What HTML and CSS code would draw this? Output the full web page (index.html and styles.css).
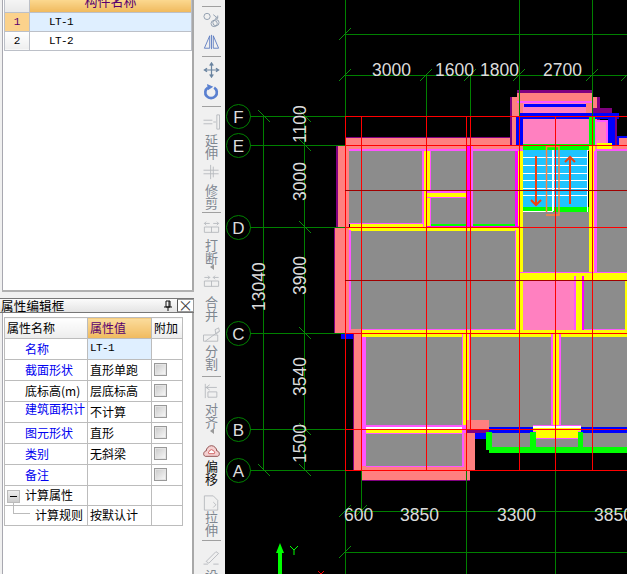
FILE: index.html
```html
<!DOCTYPE html>
<html lang="zh">
<head>
<meta charset="utf-8">
<title>属性编辑框</title>
<link rel="stylesheet" href="styles.css">
</head>
<body>
<div class="app">
  <aside class="side">
    <section class="list-panel">
      <table class="list">
        <tr class="list-head"><th class="num-head"></th><th class="name-head">构件名称</th></tr>
        <tr class="sel"><td class="num">1</td><td class="nm">LT-1</td></tr>
        <tr><td class="num">2</td><td class="nm">LT-2</td></tr>
      </table>
    </section>
    <div class="split"></div>
    <header class="title">
      <span class="title-text">属性编辑框</span>
      <svg class="pin" width="10" height="12" viewBox="0 0 10 12"><path d="M3 1h4v6H3zM1 7h8M5 7v4M6 1v6" fill="none" stroke="#111"/></svg>
      <span class="close">×</span>
    </header>
    <section class="prop-panel">
      <table class="props">
        <colgroup><col class="c1"><col class="c2"><col class="c3"></colgroup>
        <tr class="prop-head"><th class="ph">属性名称</th><th class="ph-on">属性值</th><th class="ph">附加</th></tr>
        <tr><td class="k blue">名称</td><td class="v sel-v">LT-1</td><td></td></tr>
        <tr><td class="k blue">截面形状</td><td class="v">直形单跑</td><td><i class="chk"></i></td></tr>
        <tr><td class="k">底标高(m)</td><td class="v">层底标高</td><td><i class="chk"></i></td></tr>
        <tr><td class="k blue up">建筑面积计</td><td class="v">不计算</td><td><i class="chk"></i></td></tr>
        <tr><td class="k blue">图元形状</td><td class="v">直形</td><td><i class="chk"></i></td></tr>
        <tr><td class="k blue">类别</td><td class="v">无斜梁</td><td><i class="chk"></i></td></tr>
        <tr><td class="k blue">备注</td><td class="v"></td><td><i class="chk"></i></td></tr>
        <tr class="short"><td class="k group"><i class="minus"></i>计算属性</td><td></td><td></td></tr>
        <tr class="short"><td class="k rule"><i class="elbow"></i>计算规则</td><td class="v">按默认计</td><td></td></tr>
      </table>
    </section>
  </aside>

  <nav class="bar">
    <div class="grp g1">
      <svg class="ic" viewBox="0 0 20 18"><circle cx="5" cy="5" r="3.5"/><circle cx="13" cy="13" r="3.5"/><circle cx="15" cy="12" r="3.5"/><path d="M12 3l5 4M17 4v3h-3" class="dk"/></svg>
      <svg class="ic" viewBox="0 0 20 18"><path d="M8 2L2 16h6zM12 2l6 14h-6zM10 1v16" class="bl"/></svg>
    </div>
    <div class="grp g1b">
      <svg class="ic" viewBox="0 0 20 18"><path d="M10 1v16M2 9h16M8 4l2-3 2 3M8 14l2 3 2-3M5 7L2 9l3 2M15 7l3 2-3 2" class="mv"/></svg>
      <svg class="ic" viewBox="0 0 20 18"><path d="M6 4a6.500 6.500 0 1 0 7 0" class="rot"/><path d="M5 0l7 3-6 4z" class="rot-h"/></svg>
    </div>
    <div class="grp g2">
      <div class="tool">
        <svg class="ic" viewBox="0 0 20 18"><path d="M1 7h10M1 11h10M16 1h3v16h-3zM12 9h3" class="gr"/></svg>
        <span class="lb">延<br>伸</span>
      </div>
      <div class="tool t2">
        <svg class="ic" viewBox="0 0 20 18"><path d="M1 7h17M1 11h17M9 1v16M12 3v12" class="gr"/></svg>
        <span class="lb">修<br>剪</span>
      </div>
    </div>
    <div class="grp g3">
      <div class="tool">
        <svg class="ic" viewBox="0 0 20 18"><path d="M2 9h16v6H2zM10 9v6M2 5h6M12 5h6M4 3L2 5l2 2M16 3l2 2-2 2" class="gr"/></svg>
        <span class="lb">打<br>断</span>
        <i class="tri"></i>
      </div>
      <div class="tool t3">
        <svg class="ic" viewBox="0 0 20 18"><path d="M2 9h16v6H2zM10 9v6M2 5h6M12 5h6M6 3l2 2-2 2M14 3l-2 2 2 2" class="gr"/></svg>
        <span class="lb">合<br>并</span>
      </div>
      <div class="tool t4">
        <svg class="ic" viewBox="0 0 20 18"><path d="M1 9h16v7H1zM3 16L18 5M14 3l4-2 1 4-4 3z" class="gr"/></svg>
        <span class="lb">分<br>割</span>
      </div>
    </div>
    <div class="grp g4">
      <div class="tool">
        <svg class="ic" viewBox="0 0 20 18"><path d="M3 1v16M3 5h13M8 2L4 5l4 3M6 10h10v6H6z" class="gr"/></svg>
        <span class="lb">对<br>齐</span>
        <i class="tri"></i>
      </div>
      <div class="tool t5">
        <svg class="ic" viewBox="0 0 20 18"><path d="M3 15c-3-1-2-6 1-6 0-3 3-6 6-6s6 3 6 6c3 0 4 5 1 6z" class="off"/><path d="M7 12c-1-1 0-3 1-3 0-2 4-2 4 0 2 0 2 3 1 3z" class="off2"/></svg>
        <span class="lb act">偏<br>移</span>
      </div>
      <div class="tool t6">
        <svg class="ic" viewBox="0 0 20 18"><path d="M2 1h10l5 5v11H2zM12 8l3 3-3 3" class="gr"/></svg>
        <span class="lb">拉<br>伸</span>
      </div>
    </div>
    <div class="tool t7">
      <svg class="ic" viewBox="0 0 20 18"><path d="M4 14L15 3l3 2L7 16zM1 17h5M12 17h6" class="gr"/></svg>
      <span class="lb">设</span>
    </div>
  </nav>

  <main class="canvas">
    <svg class="plan" width="402" height="574" viewBox="225 0 402 574">
      <g class="solid">
        <rect class="pu" x="517" y="90" width="75" height="3"/>
        <rect class="pu" x="510" y="97" width="90" height="49"/>
        <rect class="pk" x="512" y="97" width="85" height="49"/>
        <rect class="pk" x="517" y="93" width="75" height="5"/>
        <rect class="mg" x="517" y="101" width="75" height="2"/>
        <rect class="hp" x="523" y="103" width="63" height="11"/>
        <rect class="bl" x="524" y="104" width="62" height="3"/>
        <rect class="pu" x="592" y="108" width="20" height="5"/>
        <rect class="bl" x="519" y="113" width="100" height="6"/>
        <rect class="bl" x="516" y="117" width="7" height="29"/>
        <rect class="hp" x="523" y="119" width="66" height="27"/>
        <rect class="gn" x="589" y="117" width="6" height="29"/>
        <rect class="mg" x="595" y="120" width="13" height="26"/>
        <rect class="hp" x="596" y="122" width="10" height="24"/>
        <rect class="bl" x="608" y="117" width="7" height="29"/>
        <rect class="pu" x="615" y="117" width="2" height="29"/>
        <rect class="bl" x="617" y="136" width="10" height="10"/>
        <rect class="pu" x="345" y="137" width="165" height="10"/>
        <rect class="pk" x="345" y="138" width="165" height="13"/>
        <rect class="pk" x="510" y="145" width="117" height="6"/>
        <rect class="pk" x="619" y="138" width="8" height="8"/>
        <rect class="yl" x="597" y="143" width="15" height="6"/>
        <rect class="mg" x="345" y="149" width="282" height="2"/>
        <rect class="pu" x="336" y="146" width="4" height="81"/>
        <rect class="pk" x="338" y="146" width="11" height="81"/>
        <rect class="pu" x="334" y="227" width="3" height="106"/>
        <rect class="pk" x="335" y="227" width="14" height="106"/>
        <rect class="pk" x="345" y="325" width="16" height="9"/>
        <rect class="bl" x="341" y="334" width="12" height="5"/>
        <rect class="pu" x="353" y="334" width="2" height="136"/>
        <rect class="pk" x="354" y="334" width="8" height="136"/>
        <rect class="gy" x="349" y="151" width="73" height="73"/>
        <rect class="mg" x="422" y="151" width="9" height="76"/>
        <rect class="yl" x="424" y="151" width="6" height="76"/>
        <rect class="gy" x="431" y="151" width="36" height="41"/>
        <rect class="mg" x="427" y="191" width="40" height="7"/>
        <rect class="yl" x="427" y="193" width="40" height="4"/>
        <rect class="gy" x="431" y="198" width="36" height="26"/>
        <rect class="gn" x="431" y="224" width="85" height="2"/>
        <rect class="hm" x="466" y="146" width="7" height="81"/>
        <rect class="mg" x="470" y="146" width="3" height="81"/>
        <rect class="gy" x="473" y="151" width="42" height="73"/>
        <rect class="hm" x="515" y="151" width="3" height="76"/>
        <rect class="yl" x="518" y="151" width="5" height="76"/>
        <rect class="mg" x="349" y="223" width="73" height="1"/>
        <rect class="yl" x="350" y="224" width="73" height="4"/>
        <rect class="hm" x="427" y="226" width="92" height="1"/>
        <rect class="yl" x="349" y="228" width="171" height="3"/>
        <rect class="gy" x="523" y="212" width="66" height="60"/>
        <rect class="cy" x="523" y="150" width="64" height="62"/>
        <rect class="gn" x="523" y="144" width="66" height="6"/>
        <rect class="gn" x="523" y="207" width="66" height="5"/>
        <rect class="yl" x="589" y="146" width="6" height="126"/>
        <rect class="mg" x="594" y="151" width="3" height="121"/>
        <rect class="gy" x="597" y="151" width="30" height="121"/>
        <rect class="gy" x="349" y="231" width="166" height="98"/>
        <rect class="mg" x="349" y="230" width="2" height="100"/>
        <rect class="mg" x="515" y="230" width="8" height="104"/>
        <rect class="yl" x="516" y="228" width="7" height="102"/>
        <rect class="mg" x="519" y="272" width="108" height="1"/>
        <rect class="yl" x="519" y="273" width="108" height="7"/>
        <rect class="hp" x="523" y="280" width="53" height="50"/>
        <rect class="mg" x="574" y="276" width="2" height="58"/>
        <rect class="yl" x="576" y="278" width="6" height="52"/>
        <rect class="hm" x="582" y="276" width="2" height="58"/>
        <rect class="gy" x="584" y="280" width="41" height="49"/>
        <rect class="mg" x="584" y="329" width="43" height="1"/>
        <rect class="yl" x="625" y="280" width="2" height="50"/>
        <rect class="mg" x="361" y="329" width="154" height="2"/>
        <rect class="yl" x="361" y="330" width="266" height="7"/>
        <rect class="mg" x="361" y="337" width="5" height="133"/>
        <rect class="gy" x="366" y="337" width="96" height="88"/>
        <rect class="mg" x="462" y="334" width="9" height="91"/>
        <rect class="yl" x="463" y="334" width="6" height="91"/>
        <rect class="gy" x="471" y="337" width="80" height="110"/>
        <rect class="mg" x="551" y="334" width="10" height="98"/>
        <rect class="yl" x="553" y="334" width="6" height="98"/>
        <rect class="gy" x="561" y="337" width="66" height="110"/>
        <rect class="mg" x="362" y="425" width="105" height="9"/>
        <rect class="wh" x="366" y="427" width="96" height="2"/>
        <rect class="yl" x="366" y="429" width="96" height="4"/>
        <rect class="gy" x="366" y="434" width="96" height="32"/>
        <rect class="mg" x="366" y="466" width="96" height="1"/>
        <rect class="mg" x="462" y="434" width="2" height="33"/>
        <rect class="pk" x="361" y="466" width="5" height="4"/>
        <rect class="pk" x="464" y="433" width="11" height="37"/>
        <rect class="pu" x="362" y="470" width="108" height="11"/>
        <rect class="pk" x="362" y="467" width="108" height="13"/>
        <rect class="pk" x="466" y="420" width="23" height="10"/>
        <rect class="pu" x="466" y="430" width="23" height="3"/>
        <rect class="bl" x="475" y="433" width="14" height="6"/>
        <rect class="bk" x="475" y="439" width="11" height="35"/>
        <rect class="bl" x="489" y="427" width="138" height="6"/>
        <rect class="mg" x="533" y="425" width="48" height="7"/>
        <rect class="wh" x="533" y="426" width="48" height="2"/>
        <rect class="yl" x="533" y="428" width="48" height="3"/>
        <rect class="mg" x="535" y="431" width="46" height="9"/>
        <rect class="yl" x="536" y="431" width="42" height="7"/>
        <rect class="gy" x="536" y="439" width="42" height="8"/>
        <rect class="gn" x="486" y="432" width="6" height="18"/>
        <rect class="gn" x="530" y="432" width="6" height="15"/>
        <rect class="gn" x="578" y="432" width="5" height="15"/>
        <rect class="gn" x="489" y="447" width="138" height="6"/>
      </g>
      <g class="thin-w">
        <path d="M523 157h64M523 165h64M523 173h64M523 180h64M523 188h64M523 195h64"/>
        <path d="M523 211h29V150M553 150v61M587 150v62"/>
      </g>
      <path class="or" d="M546.500 212V146.500h12.500V215h-13"/>
      <path class="arr" d="M536 156v49M531 200l5 5 5-5M570 204v-47M565 162l5-5 5 5"/>
      <g class="grid">
        <path d="M345.500 0V574M519.500 0V116M592.500 0V116M426.500 75V116M470.500 75V116M361.500 470V511M466.500 470V574M555.500 470V574M263.500 116V470M304.500 116V470"/>
        <path d="M345 34.500H627M345 75.500H627M345 511.500H627M345 552.500H627"/>
        <path d="M250 116.500H345M250 145.500H345M250 227.500H345M250 333.500H345M250 429.500H345M250 470.500H345"/>
        <path class="tick" d="M339 40l12-12M339 81l12-12M420 81l12-12M464 81l12-12M513 81l12-12M586 81l12-12M339 517l12-12M355 517l12-12M339 558l12-12M621 81l6-6M258 110l12 12M299 110l12 12M299 139l12 12M299 221l12 12M299 327l12 12M299 423l12 12M299 464l12 12M258 464l12 12"/>
        <circle cx="238.500" cy="116.500" r="12"/>
        <circle cx="238.500" cy="145.500" r="12"/>
        <circle cx="238.500" cy="227.500" r="12"/>
        <circle cx="238.500" cy="333.500" r="12"/>
        <circle cx="238.500" cy="429.500" r="12"/>
        <circle cx="238.500" cy="470.500" r="12"/>
      </g>
      <g class="red">
        <path d="M345.500 116V470M361.500 116V470M426.500 116V470M466.500 116V470M470.500 116V429M519.500 116V470M555.500 116V470M592.500 116V470"/>
        <path d="M345 116.500H627M345 145.500H627M345 227.500H627M345 333.500H627M345 429.500H627M345 470.500H627"/>
        <path class="dred" d="M345 190.500H627M345 280.500H627"/>
      </g>
      <g class="dim">
        <text x="372" y="76">3000</text>
        <text x="435" y="76">1600</text>
        <text x="480" y="76">1800</text>
        <text x="543" y="76">2700</text>
        <text x="344" y="521">600</text>
        <text x="400" y="521">3850</text>
        <text x="497" y="521">3300</text>
        <text x="594" y="521">3850</text>
        <text transform="translate(306 143) rotate(-90)">1100</text>
        <text transform="translate(306 201) rotate(-90)">3000</text>
        <text transform="translate(306 295) rotate(-90)">3900</text>
        <text transform="translate(306 396) rotate(-90)">3540</text>
        <text transform="translate(306 463) rotate(-90)">1500</text>
        <text transform="translate(265 311) rotate(-90)">13040</text>
      </g>
      <g class="axis-name">
        <text x="238.500" y="122.500">F</text>
        <text x="238.500" y="151.500">E</text>
        <text x="238.500" y="233.500">D</text>
        <text x="238.500" y="339.500">C</text>
        <text x="238.500" y="435.500">B</text>
        <text x="238.500" y="476.500">A</text>
      </g>
      <path class="y-arrow" d="M280 543l4 10h-2v21h-4v-21h-2z"/>
      <path class="y-label" d="M290 546l4 4 4-4M294 550v5"/>
      <path class="x-label" d="M318 571l3 3 3-3"/>
    </svg>
  </main>
</div>
</body>
</html>
```

FILE: styles.css
```css
* { box-sizing: border-box; }
html, body { margin: 0; padding: 0; background: #f0f0f0; }
body { width: 627px; height: 574px; overflow: hidden; font-family: "Noto Sans CJK SC", "Liberation Sans", sans-serif; font-size: 12px; color: #000; }
.app { display: flex; width: 627px; height: 574px; }

/* left side */
.side { width: 195px; flex: none; display: flex; flex-direction: column; padding-left: 2px; padding-right: 1px; }
.list-panel { height: 290px; background: #fff; border-left: 1px solid #a8a8b0; border-right: 2px solid #a8a8a8; padding-left: 1px; }
.list { border-collapse: collapse; width: 188px; table-layout: fixed; }
.list td, .list th { border: 1px solid #bcc0c8; padding: 0; }
.list .list-head { height: 12px; }
.list-head th { border-top: 0; font-weight: 400; line-height: 2px; height: 12px; vertical-align: top; overflow: hidden; }
.num-head { width: 25px; background: linear-gradient(#f4f4f4, #e8e8e8); }
.name-head { background: linear-gradient(#fbd88f, #f0ba5e); color: #58006e; font-size: 13px; }
.list tr { height: 19px; }
.num { text-align: center; background: linear-gradient(#fff, #eee); font-family: "Liberation Mono", monospace; font-size: 11px; }
.nm { padding-left: 19px !important; font-family: "Liberation Mono", monospace; font-size: 11px; letter-spacing: -.6px; }
.sel .num { background: #fbd28c; color: #58006e; }
.sel .nm { background: #dfefff; }
.split { height: 8px; border-top: 2px solid #b0b0b0; }
.title { height: 15px; display: flex; align-items: center; background: linear-gradient(#fbfbfb, #e4e4e4); border-top: 1px solid #777; border-bottom: 1px solid #777; margin-left: -2px; font-size: 12.500px; letter-spacing: .2px; }
.title-text { flex: 1; padding-left: 1px; }
.pin { margin-right: 4px; }
.close { width: 17px; height: 13px; border: 1px solid #999; border-left-color: #555; background: #fff; text-align: center; line-height: 10px; font-size: 15px; color: #444; }
.prop-panel { flex: 1; background: #fff; border-left: 1px solid #a8a8b0; border-right: 2px solid #a8a8a8; padding: 4px 0 0 1px; }
.props { border-collapse: collapse; width: 178px; table-layout: fixed; }
.c1 { width: 83px; } .c2 { width: 64px; } .c3 { width: 31px; }
.props td, .props th { border: 1px solid #bcbcbc; padding: 0 0 2px; height: 21px; font-weight: 400; white-space: nowrap; overflow: hidden; }
.props .short td { height: 19px; }
.ph { background: linear-gradient(#fff, #ececec); text-align: left; padding-left: 2px !important; }
.ph-on { background: linear-gradient(#fbdc9c, #f0ba5e); color: #58006e; text-align: left; padding-left: 2px !important; }
.k { padding-left: 20px !important; }
.blue { color: #0000f0; }
.up { line-height: 14px; vertical-align: top; }
.v { padding-left: 2px !important; }
.sel-v { background: #dfefff; font-family: "Liberation Mono", monospace; font-size: 11px; letter-spacing: -.6px; }
.chk { display: block; width: 13px; height: 13px; margin-left: 2px; border: 1px solid #999; background: linear-gradient(135deg, #c8c8c8, #fafafa); box-shadow: inset 0 0 0 1px #e4e4e4; }
.group { padding-left: 2px !important; overflow: visible !important; }
.minus { display: inline-block; vertical-align: middle; width: 13px; height: 13px; margin-right: 5px; border: 1px solid #bbb; background: linear-gradient(#eee, #ccc); position: relative; }
.minus::after { content: ""; position: absolute; left: 2px; right: 2px; top: 5px; height: 1px; background: #000; }
.rule { padding-left: 30px !important; position: relative; overflow: visible !important; }
.elbow { position: absolute; left: 8px; top: -3px; width: 17px; height: 11px; border-left: 1px solid #bbb; border-bottom: 1px solid #bbb; }

/* tool strip */
.bar { width: 30px; flex: none; background: #f0f0f0; display: flex; flex-direction: column; padding: 6px 4px 0 7px; overflow: hidden; }
.grp { border-bottom: 1px solid #a0a0a0; flex: none; }
.g1 { height: 51px; padding-top: 2px; border-top: 1px solid #a0a0a0; }
.g1b { height: 50px; padding-top: 2px; }
.g2 { height: 106px; padding-top: 4px; }
.g3 { height: 164px; padding-top: 3px; }
.g4 { height: 164px; padding-top: 3px; }
.ic { display: block; flex: none; width: 19px; height: 22px; padding: 3px 0; }
.ic path, .ic circle { fill: none; stroke: #b4b8bc; stroke-width: 1; }
.ic .dk, .ic circle { stroke: #8a98aa; }
.ic .bl { stroke: #5a7ac0; }
.ic .mv { stroke: #6a84a0; stroke-width: 1.400; }
.ic .rot { stroke: #5a80d0; stroke-width: 3; }
.ic .rot-h { fill: #5a80d0; stroke: none; }
.ic .off { stroke: #884444; fill: #f4d0d0; }
.ic .off2 { stroke: #cc5555; fill: #fff; }
.tool { display: flex; flex-direction: column; align-items: center; width: 19px; }
.t2 { margin-top: 2px; }
.t3 .lb { margin-top: 3px; }
.t4 { margin-top: 3px; }
.t4 .lb { margin-top: -2px; }
.t5 { margin-top: 6px; }
.t5 .lb { margin-top: -3px; }
.t6 { margin-top: 7px; }
.t6 .lb { margin-top: -4px; }
.t7 { margin-top: 5px; }
.lb { display: block; flex: none; font-size: 13px; line-height: 13px; height: 26px; color: #7f8790; text-align: center; }
.lb.act { color: #111; }
.tri { display: block; flex: none; width: 4px; height: 6px; border-style: solid; border-width: 3px 4px 3px 0; border-color: transparent #999 transparent transparent; }

/* drawing */
.canvas { flex: 1; background: #000; overflow: hidden; }
.plan { display: block; }
.solid { shape-rendering: crispEdges; }
.pk { fill: #ff8080; } .pu { fill: #800080; } .mg { fill: #ff55ff; } .hm { fill: #ff00ff; }
.hp { fill: #ff80c0; } .bl { fill: #0000ff; } .gn { fill: #00ff00; } .gy { fill: #8c8c8c; }
.yl { fill: #ffff00; } .cy { fill: #1fc4ff; } .wh { fill: #fff; } .bk { fill: #000; }
.thin-w path { fill: none; stroke: #fff; stroke-width: 1; shape-rendering: crispEdges; }
.or { fill: none; stroke: #ff8040; stroke-width: 1.500; }
.arr { fill: none; stroke: #f04010; stroke-width: 2; }
.grid path, .grid circle { fill: none; stroke: #008000; stroke-width: 1; }
.grid path { shape-rendering: crispEdges; }
.grid .tick { shape-rendering: auto; stroke: #0c8a0c; }
.red path { fill: none; stroke: #ff0000; stroke-width: 1; shape-rendering: crispEdges; }
.red .dred { stroke: #a00000; }
.dim text { font-family: "Liberation Sans", sans-serif; font-size: 17.500px; fill: #dcdcdc; }
.axis-name text { font-family: "Liberation Sans", sans-serif; font-size: 17px; fill: #dcdcdc; text-anchor: middle; }
.y-arrow { fill: #00ff00; }
.y-label { fill: none; stroke: #00ff00; stroke-width: 1; }
.x-label { fill: none; stroke: #ff0000; stroke-width: 1; }
```
